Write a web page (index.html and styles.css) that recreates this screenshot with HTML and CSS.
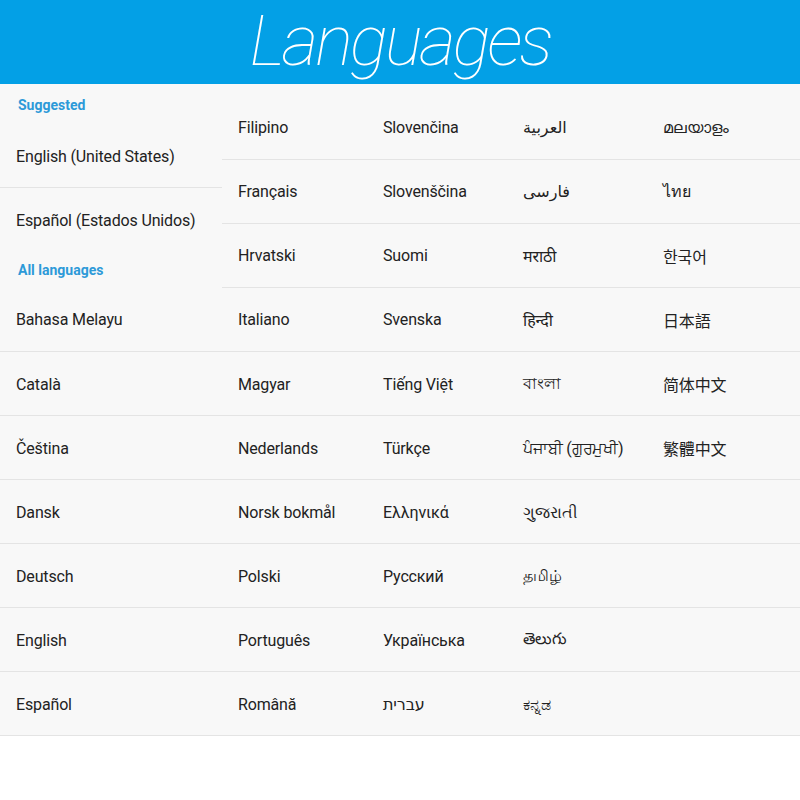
FILE: index.html
```html
<!DOCTYPE html>
<html lang="en">
<head>
  <meta charset="UTF-8">
  <meta name="viewport" content="width=device-width, initial-scale=1">
  <title>Languages</title>
  <link rel="stylesheet" href="styles.css">
</head>
<body>
  <header class="topbar">
    <h1>Languages</h1>
  </header>

  <main class="list">
    <!-- Bagian atas: kolom saran + 4 baris pertama -->
    <section class="top">
      <div class="col col-first">
        <div class="label">Suggested</div>
        <div class="item item-sug">English (United States)</div>
        <div class="item item-sug2">Español (Estados Unidos)</div>
        <div class="label label-all">All languages</div>
        <div class="item">Bahasa Melayu</div>
      </div>
      <div class="col col-pad">
        <div class="item">Filipino</div>
        <div class="item">Français</div>
        <div class="item">Hrvatski</div>
        <div class="item">Italiano</div>
      </div>
      <div class="col col-pad">
        <div class="item">Slovenčina</div>
        <div class="item">Slovenščina</div>
        <div class="item">Suomi</div>
        <div class="item">Svenska</div>
      </div>
      <div class="col col-pad">
        <div class="item">العربية</div>
        <div class="item">فارسی</div>
        <div class="item">मराठी</div>
        <div class="item">हिन्दी</div>
      </div>
      <div class="col col-pad">
        <div class="item">മലയാളം</div>
        <div class="item">ไทย</div>
        <div class="item">한국어</div>
        <div class="item">日本語</div>
      </div>
    </section>

    <!-- Baris-baris biasa -->
    <div class="row"><span>Català</span><span>Magyar</span><span>Tiếng Việt</span><span>বাংলা</span><span>简体中文</span></div>
    <div class="row"><span>Čeština</span><span>Nederlands</span><span>Türkçe</span><span>ਪੰਜਾਬੀ (ਗੁਰਮੁਖੀ)</span><span>繁體中文</span></div>
    <div class="row"><span>Dansk</span><span>Norsk bokmål</span><span>Ελληνικά</span><span>ગુજરાતી</span><span></span></div>
    <div class="row"><span>Deutsch</span><span>Polski</span><span>Русский</span><span>தமிழ்</span><span></span></div>
    <div class="row"><span>English</span><span>Português</span><span>Українська</span><span>తెలుగు</span><span></span></div>
    <div class="row"><span>Español</span><span>Română</span><span>עברית</span><span>ಕನ್ನಡ</span><span></span></div>
  </main>
</body>
</html>
```

FILE: styles.css
```css
body {
  margin: 0;
  background: #ffffff;
  font-family: Roboto, "Noto Sans", "DejaVu Sans", "Noto Sans CJK SC", sans-serif;
  color: #222;
}

/* Bilah judul biru */
.topbar {
  background: #03a0e6;
  height: 84px;
  display: flex;
  justify-content: center;
  overflow: hidden;
}

.topbar h1 {
  margin: 0;
  color: #fff;
  font-family: Roboto, sans-serif;
  font-weight: 100;
  font-style: italic;
  font-size: 71px;
  line-height: 82px;
  letter-spacing: -3px;
}

/* Daftar bahasa */
.list {
  background: #f8f8f8;
}

.top,
.row {
  display: grid;
  grid-template-columns: 222px 145px 140px 140px 1fr;
}

.col {
  display: flex;
  flex-direction: column;
}

.col-pad {
  padding-top: 12px;
}

.item,
.row span {
  box-sizing: border-box;
  height: 64px;
  display: flex;
  align-items: center;
  padding-left: 16px;
  font-size: 16px;
  letter-spacing: -0.15px;
  border-bottom: 1px solid #e4e4e4;
  white-space: nowrap;
}

.row span {
  border-bottom: none;
}

.row {
  height: 64px;
  box-sizing: border-box;
  border-bottom: 1px solid #e4e4e4;
}

.col-first .item-sug {
  height: 62px;
}

.col-first .item-sug2 {
  border-bottom: none;
}

.label {
  height: 42px;
  display: flex;
  align-items: center;
  padding-left: 18px;
  color: #2d9ad8;
  font-size: 14px;
  font-weight: 700;
}

.label-all {
  height: 36px;
}
```
